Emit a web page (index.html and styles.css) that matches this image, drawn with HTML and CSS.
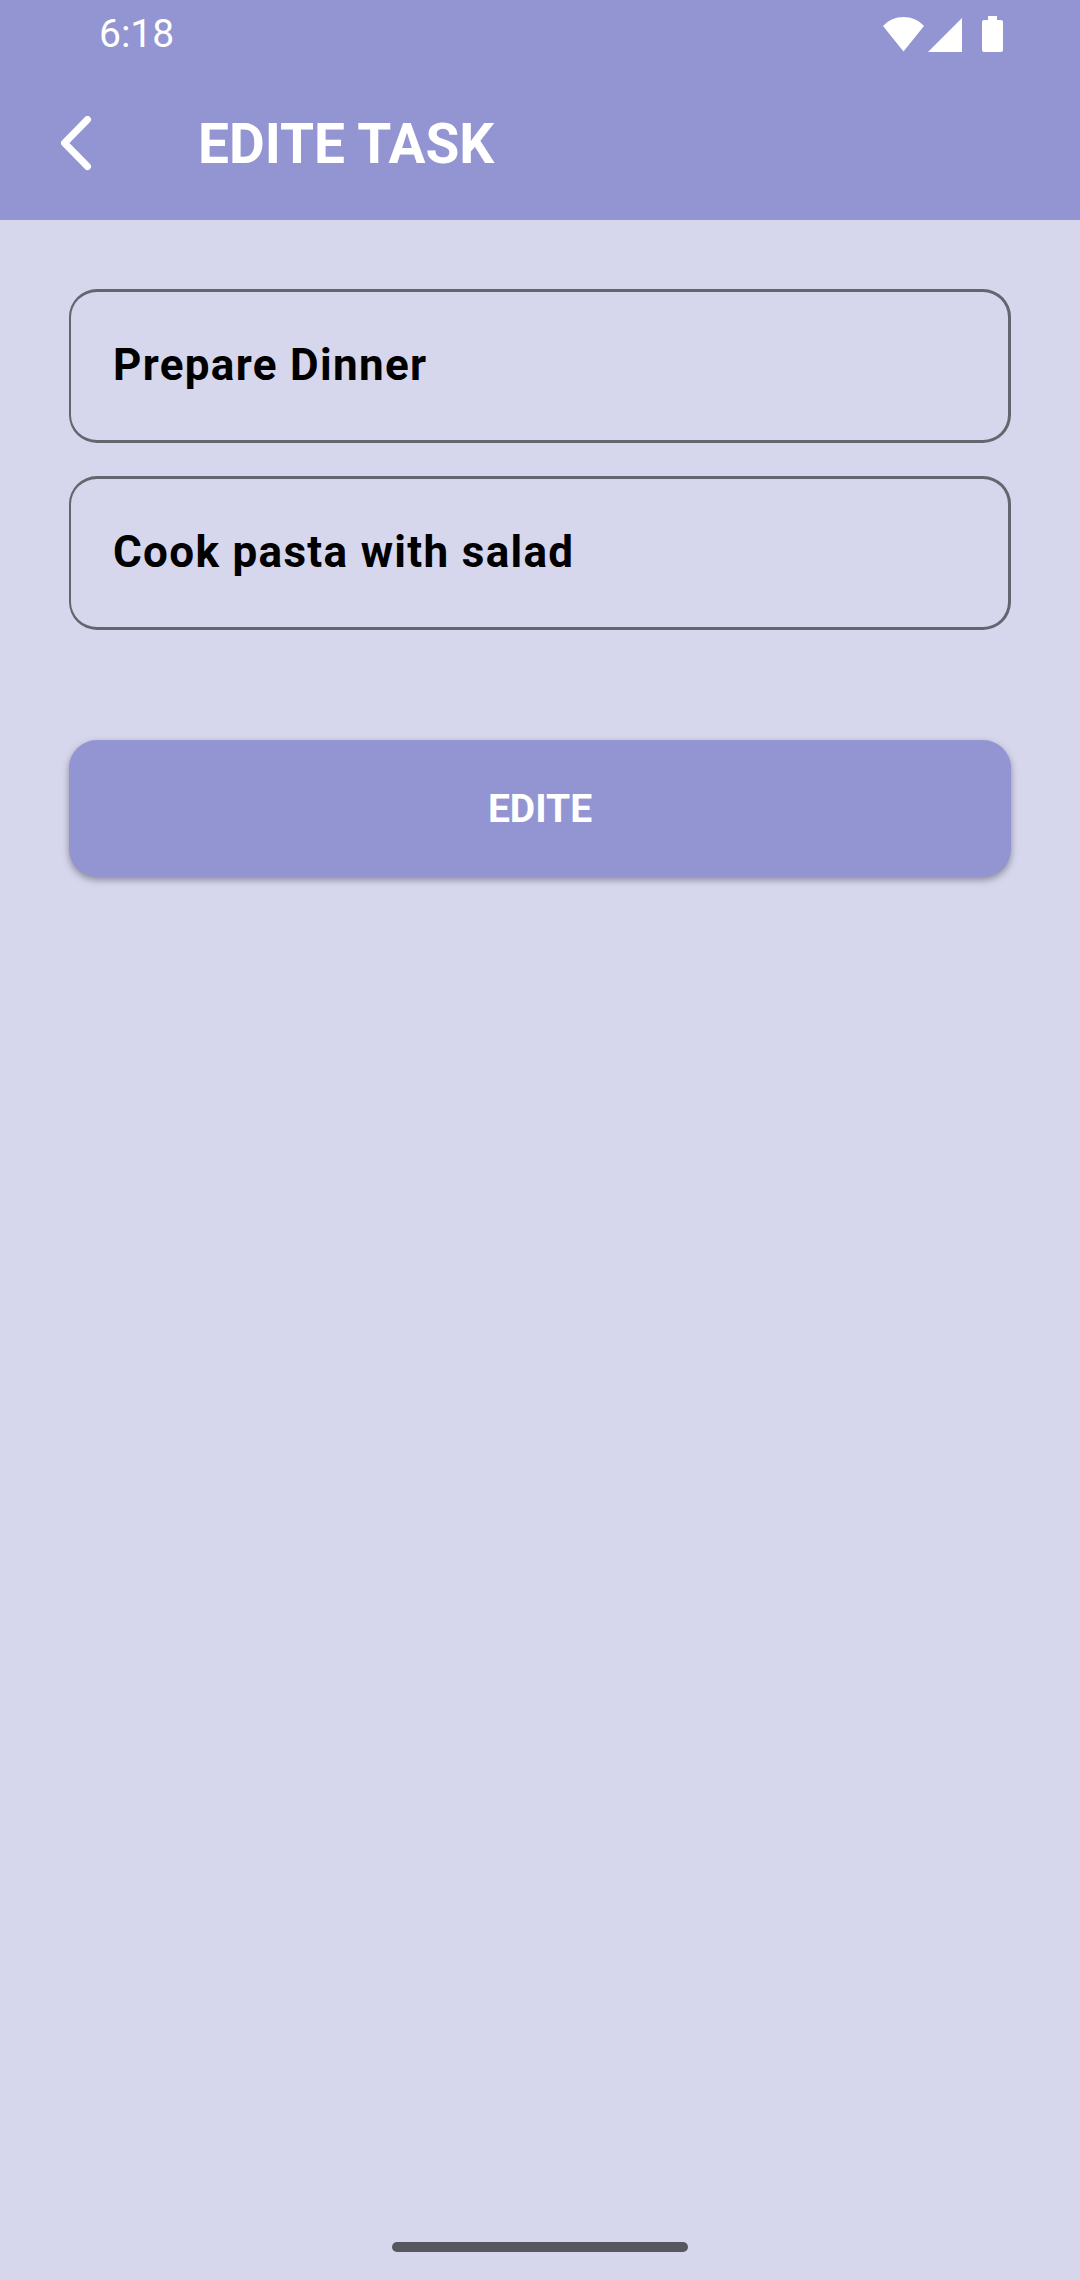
FILE: index.html
```html
<!DOCTYPE html>
<html lang="en">
<head>
  <meta charset="utf-8">
  <meta name="viewport" content="width=device-width, initial-scale=1">
  <title>Edite Task</title>
  <link rel="stylesheet" href="styles.css">
</head>
<body>
  <div class="screen">
    <header class="top">
      <div class="status">
        <time class="clock">6:18</time>
        <svg class="status-icons" width="120" height="36" viewBox="0 0 120 36" fill="#fff" aria-hidden="true">
          <path d="M0 10C11-2 30-2 41 10L20.500 35.500Z"/>
          <path d="M79 2V36H45Z"/>
          <path d="M105 0h9v4h4a2 2 0 0 1 2 2v28a2 2 0 0 1-2 2h-17a2 2 0 0 1-2-2V6a2 2 0 0 1 2-2h4z"/>
        </svg>
      </div>
      <div class="toolbar">
        <button class="back" type="button" aria-label="Back">
          <svg width="32" height="56" viewBox="0 0 32 56" aria-hidden="true">
            <path d="M27.500 3.500L4.500 27L27.500 50.500" fill="none" stroke="#fff" stroke-width="7" stroke-linecap="round" stroke-linejoin="round"/>
          </svg>
        </button>
        <h1 class="title">EDITE TASK</h1>
      </div>
    </header>
    <main class="content">
      <form class="form">
        <input class="field" type="text" aria-label="Task title" value="Prepare Dinner">
        <input class="field" type="text" aria-label="Task details" value="Cook pasta with salad">
        <button class="submit" type="button">EDITE</button>
      </form>
    </main>
    <div class="home-bar"></div>
  </div>
</body>
</html>
```
FILE: styles.css
```css
* {
  box-sizing: border-box;
}

body {
  margin: 0;
  background: #d6d6ed;
  font-family: Roboto, "Liberation Sans", sans-serif;
}

.screen {
  display: flex;
  flex-direction: column;
  min-height: 100vh;
}

.top {
  background: #9394d2;
  color: #fff;
}

.status {
  display: flex;
  align-items: center;
  justify-content: space-between;
  height: 68px;
  padding: 0 77px 0 99px;
}

.clock {
  font-size: 39px;
  line-height: 48px;
}

.toolbar {
  display: flex;
  align-items: center;
  gap: 106px;
  height: 152px;
  padding: 0 60px;
}

.back {
  display: flex;
  padding: 0;
  border: 0;
  background: none;
}

.title {
  margin: 0;
  font-size: 55px;
  line-height: 64px;
  font-weight: 700;
}

.content {
  flex: 1;
  padding: 69px;
}

.form {
  display: flex;
  flex-direction: column;
  gap: 33px;
}

.field {
  width: 100%;
  height: 154px;
  padding: 0 42px 2px;
  border: 3px solid #65656f;
  border-left-width: 2px;
  border-radius: 28px;
  background: transparent;
  color: #000;
  font: 700 44px/52px Roboto, "Liberation Sans", sans-serif;
  letter-spacing: 0.03em;
}

.submit {
  height: 137px;
  margin-top: 77px;
  border: 0;
  border-radius: 28px;
  background: #9394d2;
  box-shadow: 0 3px 7px rgba(0, 0, 0, 0.35);
  color: #fff;
  font: 700 39px/48px Roboto, "Liberation Sans", sans-serif;
}

.home-bar {
  align-self: center;
  width: 296px;
  height: 10px;
  margin-bottom: 28px;
  border-radius: 5px;
  background: #575760;
}
```
